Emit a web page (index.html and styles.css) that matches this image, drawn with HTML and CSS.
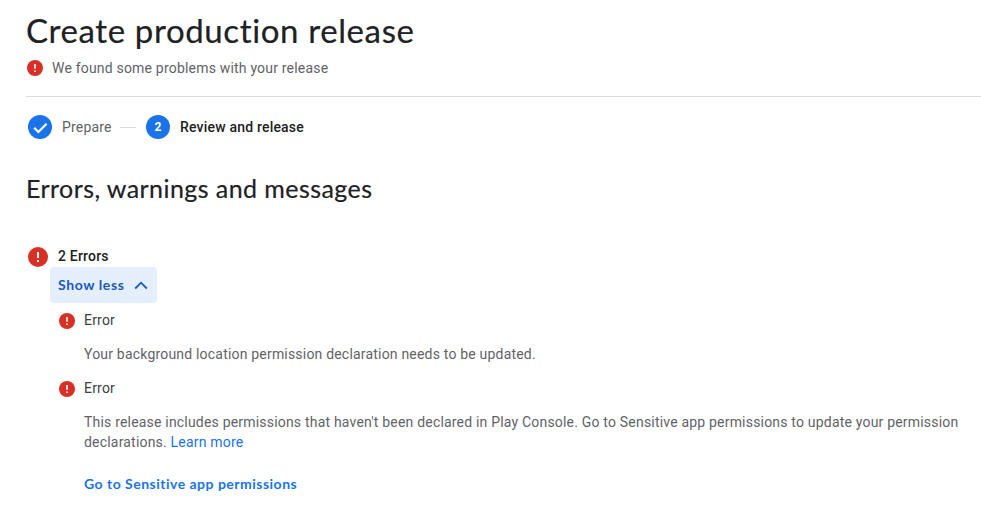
FILE: index.html
```html
<!DOCTYPE html>
<html lang="en">
<head>
    <meta charset="UTF-8">
    <meta name="viewport" content="width=device-width, initial-scale=1.0">
    <title>Create production release</title>
    <link rel="stylesheet" href="styles.css">
</head>
<body>
    <svg class="sprite" aria-hidden="true">
        <symbol id="error" viewBox="0 0 20 20">
            <circle cx="10" cy="10" r="10" fill="#d93025"/>
            <path d="M9 5h2v6H9zM9 13h2v2H9z" fill="#fff"/>
        </symbol>
    </svg>

    <!-- Header -->
    <header class="page-header">
        <h1>Create production release</h1>
        <div class="header-status">
            <svg class="icon-small"><use href="#error"/></svg>
            <span>We found some problems with your release</span>
        </div>
    </header>

    <main>
        <!-- Steps -->
        <nav class="stepper">
            <svg class="step-icon" viewBox="0 0 24 24">
                <circle cx="12" cy="12" r="12" fill="#1a73e8"/>
                <path d="M6.2 12.8l4.2 4.2 8.2-8.2" fill="none" stroke="#fff" stroke-width="2.2"/>
            </svg>
            <span class="step-prepare">Prepare</span>
            <span class="step-line"></span>
            <span class="step-number">2</span>
            <span class="step-review">Review and release</span>
        </nav>

        <h2>Errors, warnings and messages</h2>

        <!-- Errors -->
        <section class="errors">
            <div class="errors-title">
                <svg class="icon-large"><use href="#error"/></svg>
                <strong>2 Errors</strong>
            </div>
            <button class="toggle">
                <span>Show less</span>
                <svg width="14" height="9" viewBox="0 0 14 9"><path d="M1.2 7.5L7 1.7l5.8 5.8" fill="none" stroke="#185abc" stroke-width="1.8"/></svg>
            </button>

            <div class="error-item">
                <svg class="icon-small"><use href="#error"/></svg>
                <div class="error-body">
                    <h3>Error</h3>
                    <p>Your background location permission declaration needs to be updated.</p>
                </div>
            </div>
            <div class="error-item">
                <svg class="icon-small"><use href="#error"/></svg>
                <div class="error-body">
                    <h3>Error</h3>
                    <p>This release includes permissions that haven't been declared in Play Console. Go to Sensitive app permissions to update your permission<br>declarations. <a href="#">Learn more</a></p>
                    <a href="#" class="action-link">Go to Sensitive app permissions</a>
                </div>
            </div>
        </section>
    </main>
</body>
</html>
```
FILE: styles.css
```css
* {
    box-sizing: border-box;
    margin: 0;
    padding: 0;
}
body {
    background-color: #fff;
    color: #5f6368;
    font-family: Roboto, Arial, sans-serif;
    font-size: 14px;
    line-height: 20px;
    letter-spacing: 0.194px;
    padding-left: 26px;
    overflow: hidden;
}
svg {
    display: block;
    flex-shrink: 0;
}
a {
    color: #1a73e8;
    text-decoration: none;
}
.sprite {
    display: none;
}
.page-header {
    height: 97px;
    padding-top: 8px;
    border-bottom: 1px solid #dadce0;
}
h1,
h2 {
    color: #202124;
    font-family: "Google Sans", Lato, sans-serif;
    font-weight: 400;
    white-space: nowrap;
    -webkit-text-stroke: 0.2px #202124;
}
h1 {
    font-size: 33px;
    line-height: 44px;
    letter-spacing: 0.62px;
}
h2 {
    margin-top: 33px;
    font-size: 25px;
    line-height: 32px;
    letter-spacing: 0.43px;
}
.header-status {
    display: flex;
    align-items: center;
    gap: 9px;
    margin-top: 6px;
    padding-left: 1px;
}
.icon-small {
    width: 16px;
    height: 16px;
}
.icon-large {
    width: 20px;
    height: 20px;
    margin-top: 1px;
}
.stepper {
    display: flex;
    align-items: center;
    margin-top: 18px;
    padding-left: 2px;
}
.step-icon,
.step-number {
    width: 24px;
    height: 24px;
}
.step-prepare {
    width: 50px;
    margin-left: 10px;
}
.step-line {
    width: 16px;
    height: 1px;
    margin: 0 10px 0 8px;
    background-color: #dadce0;
}
.step-number {
    border-radius: 50%;
    background-color: #1a73e8;
    color: #fff;
    font-size: 12px;
    font-weight: 700;
    line-height: 24px;
    text-align: center;
}
.step-review {
    margin-left: 10px;
    color: #202124;
    font-weight: 500;
}
.errors {
    margin-top: 42px;
    padding-left: 2px;
}
.errors-title {
    display: flex;
    align-items: flex-start;
    gap: 10px;
    height: 21px;
    color: #202124;
}
.errors-title strong {
    font-weight: 500;
}
.toggle {
    display: flex;
    align-items: center;
    gap: 10px;
    width: 107px;
    height: 36px;
    margin-left: 22px;
    padding-left: 8px;
    border: none;
    border-radius: 4px;
    background-color: #e4eefd;
    color: #185abc;
    font-family: "Google Sans", Lato, sans-serif;
    font-size: 14px;
    font-weight: 700;
    letter-spacing: 0.6px;
    white-space: nowrap;
}
.toggle span {
    padding-bottom: 2px;
}
.error-item {
    display: flex;
    gap: 9px;
    margin: 7px 0 14px 31px;
}
.error-item .icon-small {
    margin-top: 3px;
}
.error-body {
    white-space: nowrap;
}
h3 {
    color: #3c4043;
    font-size: 14px;
    font-weight: 400;
    line-height: 20px;
    margin-bottom: 14px;
}
.action-link {
    display: block;
    margin-top: 22px;
    font-family: "Google Sans", Lato, sans-serif;
    font-weight: 700;
    letter-spacing: 0.49px;
}
```
